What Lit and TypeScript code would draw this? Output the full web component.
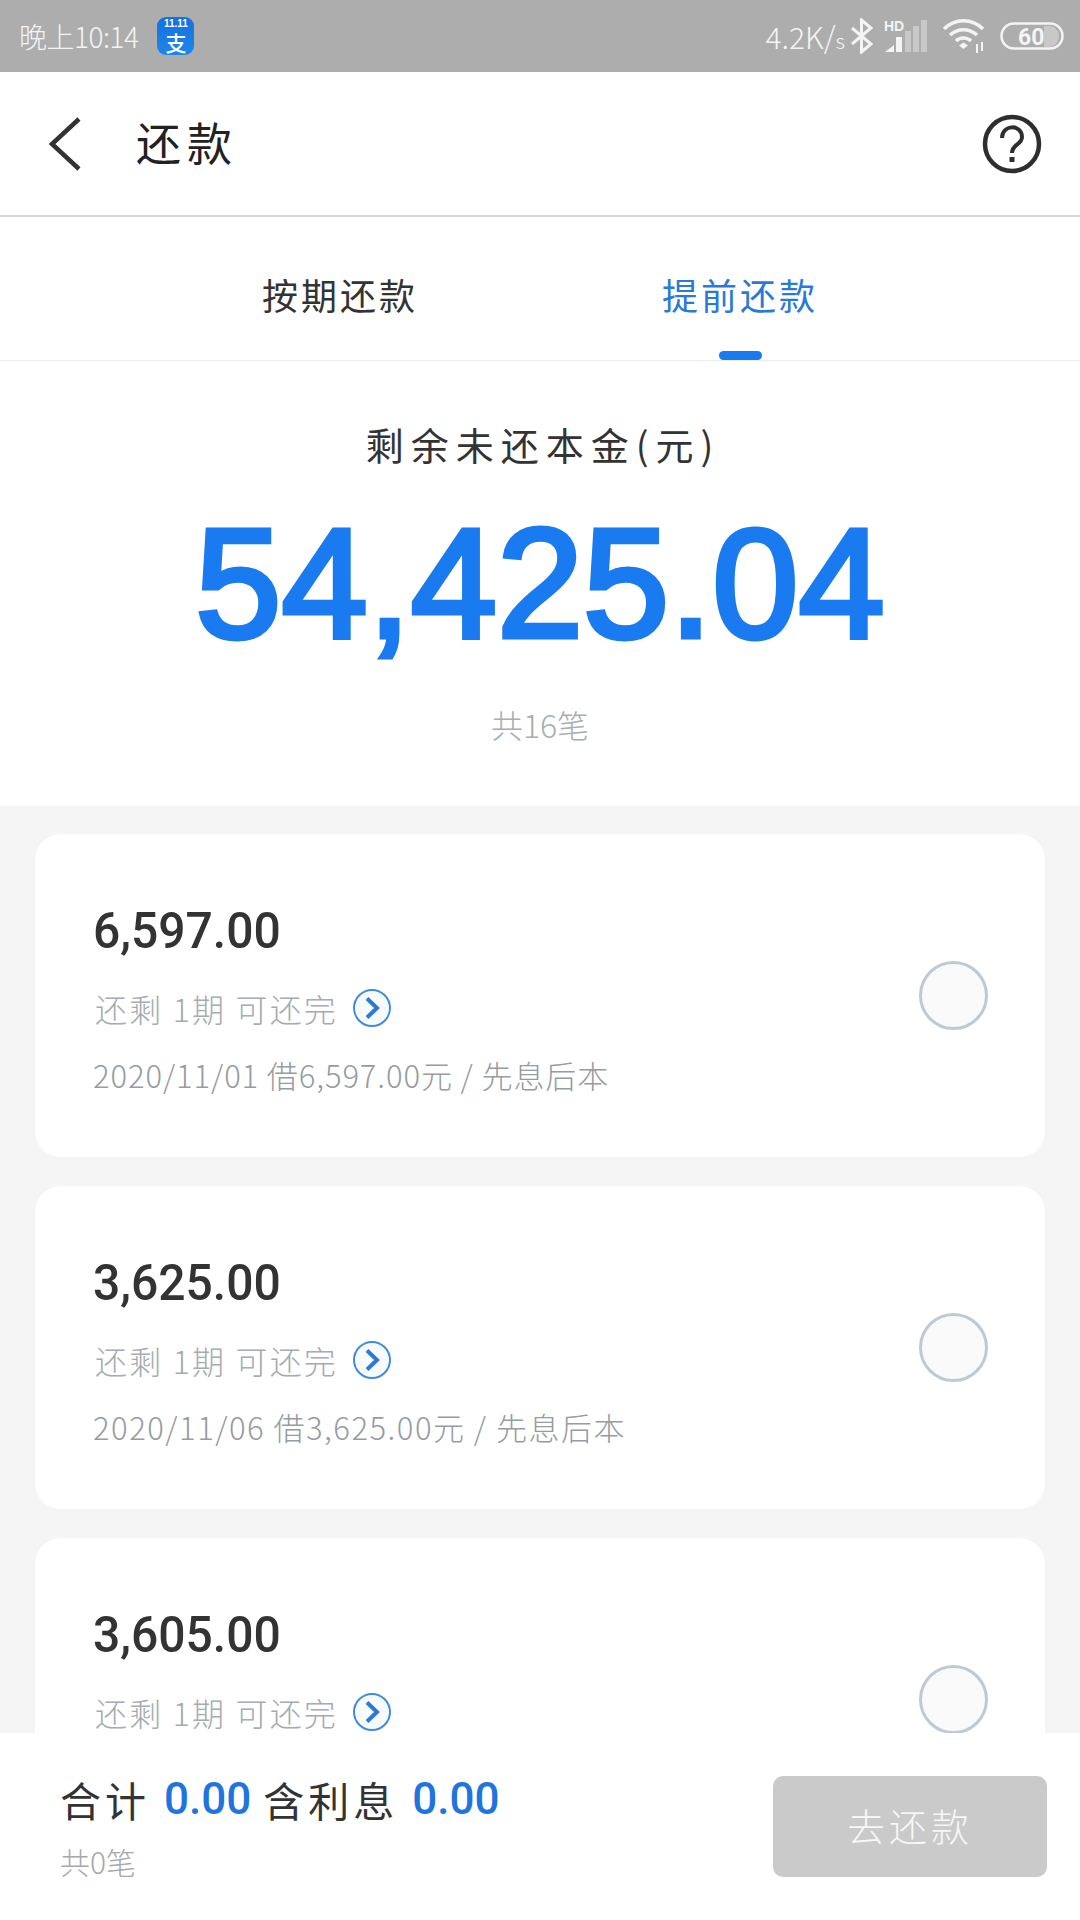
import { LitElement, html, css } from "lit";
import { customElement } from "lit/decorators.js";

const loans = [
  { amount: "6,597.00", note: "2020/11/01 借6,597.00元 / 先息后本", wide: false },
  { amount: "3,625.00", note: "2020/11/06 借3,625.00元 / 先息后本", wide: true },
  { amount: "3,605.00", note: "", wide: false },
];

@customElement("app-root")
export class AppRoot extends LitElement {
  static styles = css`
    :host {
      display: flex;
      flex-direction: column;
      width: 1080px;
      height: 1920px;
      overflow: hidden;
      background: #fff;
      font-family: "Noto Sans CJK SC", "Noto Sans", sans-serif;
      color: #333;
    }
    * { box-sizing: border-box; }

    .status {
      height: 72px;
      flex: none;
      background: #adadad;
      color: #f4f4f4;
      display: flex;
      align-items: center;
      padding: 0 16px 0 19px;
    }
    .time { font-size: 28px; font-weight: 300; line-height: 1; letter-spacing: -0.5px; }
    .app-icon {
      margin-left: 19px;
      width: 37px;
      height: 38px;
      border-radius: 9px;
      background: linear-gradient(#1570e0, #1d86ea);
      color: #fff;
      display: flex;
      flex-direction: column;
      align-items: center;
    }
    .app-icon .t { display: block; font: 700 10px/11px "Liberation Sans", sans-serif; height: 11px; margin-top: 1px; }
    .app-icon .z { display: block; font-size: 21px; line-height: 26px; height: 26px; font-weight: 500; }
    .status-right { margin-left: auto; display: flex; align-items: center; }
    .speed { font-size: 30px; font-weight: 300; line-height: 1; margin-right: 6px; letter-spacing: 0; }
    .speed small { font-size: 21px; }
    .status-right svg { display: block; }
    .sig { margin-left: 11px; }
    .wifi { margin-left: 14px; }
    .batt { margin-left: 14px; }

    .header {
      height: 145px;
      flex: none;
      border-bottom: 2px solid #d4d4d4;
      display: flex;
      align-items: center;
      padding: 0 36px 0 48px;
    }
    .header h1 {
      margin: 0 0 5px 54px;
      font-size: 45px;
      line-height: 1;
      font-weight: 400;
      color: #222;
      letter-spacing: 6px;
    }
    .help { margin-left: auto; display: block; }
    .back { display: block; }

    .tabs {
      height: 144px;
      flex: none;
      border-bottom: 1px solid #eeeeee;
      display: grid;
      grid-template-columns: 1fr 1fr;
      padding: 0 140px;
    }
    .tab {
      position: relative;
      display: flex;
      justify-content: center;
      padding-top: 53px;
      font-size: 36px;
      line-height: 48px;
      letter-spacing: 3px;
      color: #333;
    }
    .tab.active { color: #2979d9; }
    .tab.active::after {
      content: "";
      position: absolute;
      left: 50%;
      bottom: 0;
      width: 43px;
      height: 9px;
      margin-left: -21px;
      border-radius: 5px;
      background: #1a7af0;
    }

    .summary {
      height: 445px;
      flex: none;
      display: flex;
      flex-direction: column;
      align-items: center;
      padding-top: 58px;
    }
    .summary .label {
      font-size: 38px;
      line-height: 50px;
      letter-spacing: 7px;
      padding-left: 6px;
      color: #333;
    }
    .total {
      margin-top: 30px;
      font: 400 155px/170px "Liberation Sans", Arial, sans-serif;
      color: #1a7af0;
      -webkit-text-stroke: 5px #1a7af0;
      white-space: nowrap;
    }
    .count { margin-top: 33px; font-size: 32px; line-height: 44px; color: #a8adb0; font-weight: 300; }

    .list {
      flex: 1;
      min-height: 0;
      overflow: hidden;
      background: #f5f5f5;
      padding: 28px 35px 0;
      display: flex;
      flex-direction: column;
      gap: 29px;
    }
    .card {
      flex: none;
      height: 323px;
      background: #fff;
      border-radius: 26px;
      display: flex;
      align-items: flex-start;
      justify-content: space-between;
      padding: 67px 57px 0 58px;
    }
    .amount { font: 500 50px/60px Roboto, sans-serif; color: #333; transform-origin: left; transform: scaleX(0.96); }
    .terms {
      margin-top: 24px;
      display: flex;
      align-items: center;
      font-size: 32px;
      line-height: 46px;
      font-weight: 300;
      color: #a5abaf;
      letter-spacing: 2.2px;
      padding-left: 2px;
    }
    .terms svg { margin-left: 14px; display: block; }
    .note {
      margin-top: 22px;
      font-size: 31px;
      line-height: 44px;
      font-weight: 300;
      color: #969ca0;
      letter-spacing: 0.9px;
      white-space: nowrap;
    }
    .note.wide { letter-spacing: 1.5px; }
    .radio {
      width: 69px;
      height: 69px;
      border-radius: 50%;
      border: 3px solid #bccad6;
      background: #fafafa;
      flex: none;
      margin-top: 60px;
    }

    .footer {
      height: 187px;
      flex: none;
      background: #fff;
      display: flex;
      justify-content: space-between;
      padding: 38px 33px 0 60px;
    }
    .sum {
      display: flex;
      align-items: center;
      font-size: 41px;
      line-height: 56px;
      color: #333;
      letter-spacing: 4px;
    }
    .sum b {
      font: 500 44px/56px Roboto, sans-serif;
      color: #1f74de;
      letter-spacing: 0;
      margin: 0 12px 0 14px;
    }
    .sum b:last-child { margin-right: 0; }
    .footnote { margin-top: 14px; font-size: 30px; line-height: 40px; font-weight: 300; color: #a8a8a8; }
    .pay {
      width: 274px;
      height: 101px;
      margin-top: 5px;
      border-radius: 10px;
      background: #cacaca;
      color: #f7f7f7;
      display: flex;
      align-items: center;
      justify-content: center;
      font-size: 38px;
      line-height: 48px;
      padding-bottom: 3px;
      letter-spacing: 4px;
      font-weight: 300;
    }
  `;

  private chevron() {
    return html`<svg width="40" height="40" viewBox="0 0 40 40" fill="none">
      <circle cx="20" cy="20" r="18" stroke="#3f8bdc" stroke-width="2" fill="#f8fbfe"/>
      <path d="M15 10.500 L25 20 L15 29.500" stroke="#2c7ad8" stroke-width="4"/>
    </svg>`;
  }

  render() {
    return html`
      <div class="status">
        <span class="time">晚上10:14</span>
        <div class="app-icon"><span class="t">11.11</span><span class="z">支</span></div>
        <div class="status-right">
          <span class="speed">4.2K/<small>s</small></span>
          <svg width="22" height="36" viewBox="0 0 22 36" fill="none" stroke="#f4f4f4" stroke-width="3">
            <path d="M1 10 L20 26 L10.500 34 V2 L20 10 L1 26"/>
          </svg>
          <svg class="sig" width="44" height="34" viewBox="0 0 44 34">
            <text x="0" y="12" font-family="Liberation Sans, sans-serif" font-weight="700" font-size="14" fill="#f4f4f4">HD</text>
            <path d="M1 33 L10 33 L10 26 Z" fill="#f4f4f4"/>
            <rect x="12" y="18" width="6" height="15" fill="#f4f4f4"/>
            <rect x="21" y="12" width="6" height="21" fill="#c9c9c9"/>
            <rect x="29" y="7" width="6" height="26" fill="#c9c9c9"/>
            <rect x="37" y="1" width="6" height="32" fill="#c9c9c9"/>
          </svg>
          <svg class="wifi" width="44" height="36" viewBox="0 0 44 36" fill="none" stroke="#f4f4f4" stroke-width="3.500">
            <path d="M2 11 C 13 0, 30 0, 41 11"/>
            <path d="M8 17 C 16 10, 27 10, 35 17"/>
            <path d="M14 23 C 18 19, 25 19, 29 23"/>
            <path d="M17 27.500 L21.500 24.500 L26 27.500 L21.500 31 Z" fill="#f4f4f4" stroke="none"/>
            <path d="M35 26 V35 M40 24 V33" stroke-width="2"/>
          </svg>
          <svg class="batt" width="64" height="29" viewBox="0 0 64 29">
            <rect x="1.500" y="1.500" width="61" height="25" rx="12.500" fill="none" stroke="#f4f4f4" stroke-width="2.500"/>
            <path d="M44 4 H49 C55 4 59 9 59 14 C59 20 55 25 49 25 H44 Z" fill="#c8c8c8"/>
            <text x="18" y="23" font-family="Roboto, sans-serif" font-weight="700" font-size="23" fill="#f4f4f4">60</text>
          </svg>
        </div>
      </div>

      <div class="header">
        <svg class="back" width="34" height="56" viewBox="0 0 34 56" fill="none">
          <path d="M31 3 L4 28 L31 53" stroke="#333" stroke-width="4.500"/>
        </svg>
        <h1>还款</h1>
        <svg class="help" width="64" height="64" viewBox="0 0 64 64" fill="none">
          <circle cx="32" cy="32" r="27" stroke="#2e2e2e" stroke-width="4.500"/>
          <path d="M22 26 C22 12 42 12 42 25 C42 33 32 32 32 41" stroke="#2e2e2e" stroke-width="4"/>
          <rect x="29.500" y="45" width="5" height="5" fill="#2e2e2e"/>
        </svg>
      </div>

      <div class="tabs">
        <div class="tab">按期还款</div>
        <div class="tab active">提前还款</div>
      </div>

      <div class="summary">
        <div class="label">剩余未还本金(元)</div>
        <div class="total">54,425.04</div>
        <div class="count">共16笔</div>
      </div>

      <div class="list">
        ${loans.map(
          (l) => html`<div class="card">
            <div>
              <div class="amount">${l.amount}</div>
              <div class="terms">还剩 1期 可还完${this.chevron()}</div>
              ${l.note ? html`<div class="note ${l.wide ? "wide" : ""}">${l.note}</div>` : ""}
            </div>
            <div class="radio"></div>
          </div>`
        )}
      </div>

      <div class="footer">
        <div>
          <div class="sum">合计<b>0.00</b>含利息<b>0.00</b></div>
          <div class="footnote">共0笔</div>
        </div>
        <div class="pay">去还款</div>
      </div>
    `;
  }
}
